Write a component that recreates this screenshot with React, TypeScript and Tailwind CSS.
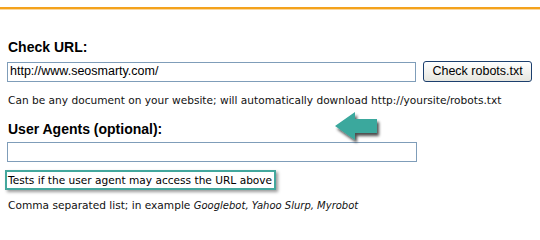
import React from "react";

export default function App() {
  const verdana = { fontFamily: '"DejaVu Sans", Verdana, sans-serif' };
  return (
    <div className="relative w-[540px] h-[229px] bg-white overflow-hidden" style={{ fontFamily: '"Liberation Sans", Arial, sans-serif' }}>
      <div className="pt-[7px]">
        <div className="h-[2px] bg-[#f4a21c]" />
        <div className="h-[1px] bg-[#fbd9a0]" />
      </div>
      <div className="px-2">
        <div className="mt-[29px] text-[14px] leading-[16px] font-bold text-black">Check URL:</div>
        <div className="mt-[6px] flex items-center">
          <div className="w-[410px] h-[20px] -ml-[1px] border border-[#7f9db9] bg-white flex items-center pl-[2px] text-[12.5px] text-black">
            http://www.seosmarty.com/
          </div>
          <button className="ml-[7px] w-[109px] h-[21px] rounded-[3px] border border-[#1c3f6e] bg-gradient-to-b from-white to-[#e6e6df] text-[12.5px] text-black flex items-center justify-center">
            Check robots.txt
          </button>
        </div>
        <div className="mt-[12px] text-[10.6px] leading-[13px] text-[#111]" style={verdana}>
          Can be any document on your website; will automatically download http://yoursite/robots.txt
        </div>
        <div className="mt-[14px] text-[14px] leading-[16px] font-bold text-black">User Agents (optional):</div>
        <div className="mt-[5px] w-[410px] h-[20px] -ml-[1px] border border-[#7f9db9] bg-white" />
        <div className="mt-[8px] -ml-[3px] inline-flex items-center h-[20px] border-2 border-[#43a79d] pl-[1px] pr-[2px] shadow-[2px_2px_3px_rgba(0,0,0,0.4)] text-[10.6px] leading-[16px] text-black" style={verdana}>
          Tests if the user agent may access the URL above
        </div>
        <div className="mt-[8px] text-[10.6px] leading-[13px] text-[#111]" style={verdana}>
          Comma separated list; in example <i className="text-[10px]">Googlebot, Yahoo Slurp, Myrobot</i>
        </div>
      </div>
      <svg className="absolute left-[330px] top-[106px]" width="56" height="42" viewBox="0 0 56 42">
        <defs>
          <filter id="sh" x="-20%" y="-20%" width="150%" height="160%">
            <feGaussianBlur in="SourceAlpha" stdDeviation="1.5" />
            <feOffset dx="2" dy="3" result="b" />
            <feComponentTransfer>
              <feFuncA type="linear" slope="0.7" />
            </feComponentTransfer>
            <feMerge>
              <feMergeNode />
              <feMergeNode in="SourceGraphic" />
            </feMerge>
          </filter>
        </defs>
        <polygon
          points="5,20 25,6 25,13 47,13 47,27 25,27 25,34"
          fill="#3aa89d"
          filter="url(#sh)"
        />
      </svg>
    </div>
  );
}
